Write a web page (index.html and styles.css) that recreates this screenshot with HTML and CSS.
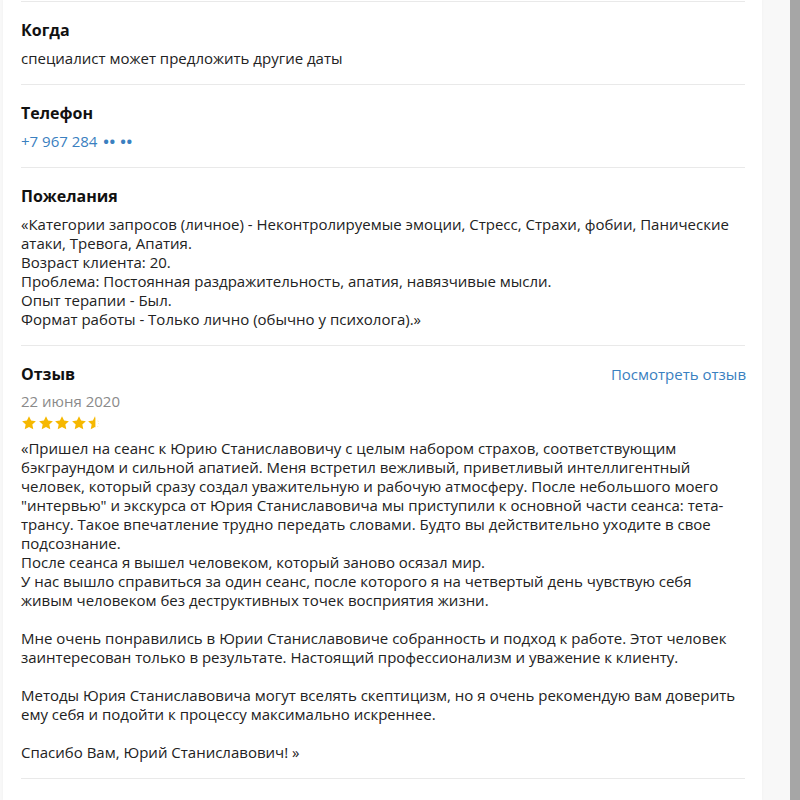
FILE: index.html
```html
<!DOCTYPE html>
<html lang="ru">
<head>
<meta charset="utf-8">
<link rel="stylesheet" href="styles.css">
</head>
<body>
<div class="page">
  <main class="card">
    <section class="sec">
      <h2 class="title">Когда</h2>
      <p class="text">специалист может предложить другие даты</p>
    </section>
    <section class="sec">
      <h2 class="title">Телефон</h2>
      <p class="text link">+7 967 284 <span class="dots">•• ••</span></p>
    </section>
    <section class="sec">
      <h2 class="title">Пожелания</h2>
      <p class="text">«Категории запросов (личное) - Неконтролируемые эмоции, Стресс, Страхи, фобии, Панические<br>атаки, Тревога, Апатия.<br>Возраст клиента: 20.<br>Проблема: Постоянная раздражительность, апатия, навязчивые мысли.<br>Опыт терапии - Был.<br>Формат работы - Только лично (обычно у психолога).»</p>
    </section>
    <section class="sec last">
      <div class="head-row">
        <h2 class="title">Отзыв</h2>
        <a class="more link">Посмотреть отзыв</a>
      </div>
      <div class="date">22 июня 2020</div>
      <div class="stars">
        <svg viewBox="0 0 24 24" class="star"><path d="M12 1.8l3.1 6.6 7.2.9-5.3 5 1.4 7.1L12 17.9l-6.4 3.5 1.4-7.1-5.3-5 7.2-.9z"/></svg>
        <svg viewBox="0 0 24 24" class="star"><path d="M12 1.8l3.1 6.6 7.2.9-5.3 5 1.4 7.1L12 17.9l-6.4 3.5 1.4-7.1-5.3-5 7.2-.9z"/></svg>
        <svg viewBox="0 0 24 24" class="star"><path d="M12 1.8l3.1 6.6 7.2.9-5.3 5 1.4 7.1L12 17.9l-6.4 3.5 1.4-7.1-5.3-5 7.2-.9z"/></svg>
        <svg viewBox="0 0 24 24" class="star"><path d="M12 1.8l3.1 6.6 7.2.9-5.3 5 1.4 7.1L12 17.9l-6.4 3.5 1.4-7.1-5.3-5 7.2-.9z"/></svg>
        <svg viewBox="0 0 24 24" class="star"><path d="M12 1.8l3.1 6.6 7.2.9-5.3 5 1.4 7.1L12 17.9l-6.4 3.5 1.4-7.1-5.3-5 7.2-.9z"/><path class="half-cut" d="M12.6 1.8V23H24V1.8z"/><path d="M15.6 8.6l1.7.3-.6.7zM17.8 12.4l.5 1.4-1-.7zM15.8 16.8l1.3.8-1 .3z"/></svg>
      </div>
      <p class="text">«Пришел на сеанс к Юрию Станиславовичу с целым набором страхов, соответствующим<br>бэкграундом и сильной апатией. Меня встретил вежливый, приветливый интеллигентный<br>человек, который сразу создал уважительную и рабочую атмосферу. После небольшого моего<br>"интервью" и экскурса от Юрия Станиславовича мы приступили к основной части сеанса: тета-<br>трансу. Такое впечатление трудно передать словами. Будто вы действительно уходите в свое<br>подсознание.<br>После сеанса я вышел человеком, который заново осязал мир.<br>У нас вышло справиться за один сеанс, после которого я на четвертый день чувствую себя<br>живым человеком без деструктивных точек восприятия жизни.<br><br>Мне очень понравились в Юрии Станиславовиче собранность и подход к работе. Этот человек<br>заинтересован только в результате. Настоящий профессионализм и уважение к клиенту.<br><br>Методы Юрия Станиславовича могут вселять скептицизм, но я очень рекомендую вам доверить<br>ему себя и подойти к процессу максимально искреннее.<br><br>Спасибо Вам, Юрий Станиславович! »</p>
    </section>
  </main>
  <div class="gutter"></div>
  <div class="scrollbar"></div>
</div>
</body>
</html>
```
FILE: styles.css
```css
* { box-sizing: border-box; }
html, body { margin: 0; padding: 0; }
body {
  background: #f8f8f8;
  font-family: "Open Sans", "Lato", sans-serif;
  color: #222;
}
.page {
  display: flex;
  height: 800px;
  overflow: hidden;
}
.card {
  width: 759px;
  margin-left: 3px;
  background: #fff;
  padding: 1px 17px 0 18px;
  box-shadow: 0 0 3px rgba(0,0,0,0.04);
}
.gutter { flex: 1; }
.scrollbar {
  width: 10px;
  background: #a6a6a6;
}
.sec {
  border-top: 1px solid #e9e9e9;
  padding: 17px 0 16px;
}
.sec.last { border-bottom: 1px solid #e9e9e9; }
.title {
  margin: 0 0 8px;
  font-size: 16px;
  line-height: 22px;
  font-weight: 700;
  color: #111;
}
.text {
  margin: 0;
  font-size: 15px;
  line-height: 19px;
  color: #222;
}
.link { color: #3a80c0; }
.dots { font-size: 15px; font-weight: 700; letter-spacing: 0.6px; margin-left: 2px; }
.head-row {
  display: flex;
  justify-content: space-between;
  align-items: center;
}
.more {
  font-size: 15px;
  line-height: 22px;
  margin-bottom: 8px;
  margin-right: -1px;
}
.date {
  font-size: 15px;
  line-height: 19px;
  color: #8a8a8a;
  margin-top: -1px;
}
.stars {
  display: flex;
  gap: 0.5px;
  margin: 4px 0 8px;
  height: 16px;
  align-items: center;
}
.star {
  width: 16px;
  height: 16px;
  fill: #f6b800;
}
.half-cut { fill: #fff; }
```
